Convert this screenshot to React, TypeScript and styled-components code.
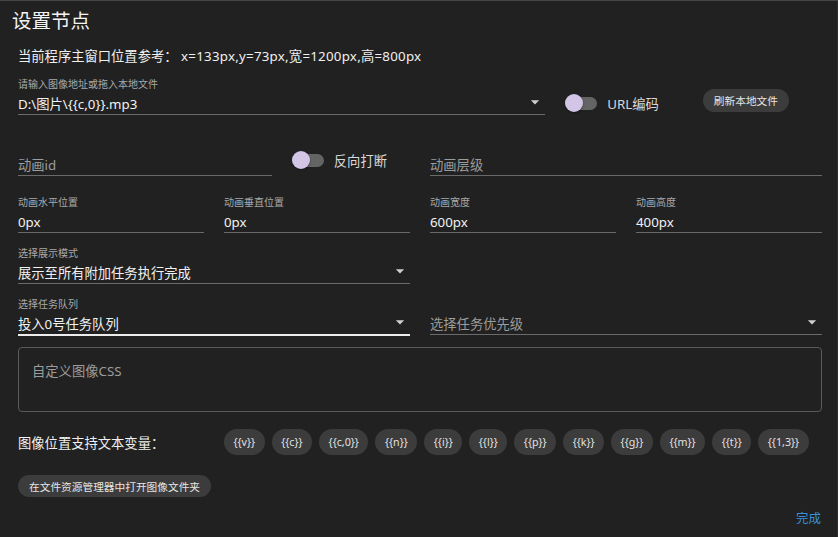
import React from 'react';
import styled, { createGlobalStyle } from 'styled-components';

const GlobalStyle = createGlobalStyle`
  html, body {
    margin: 0;
    padding: 0;
    background: #212121;
  }
  body {
    font-family: "Noto Sans", "Noto Sans CJK SC", sans-serif;
    color: #f0f0f0;
  }
  * {
    box-sizing: border-box;
  }
`;

const Dialog = styled.div`
  width: 838px;
  height: 537px;
  background: #212121;
  border-top: 1px solid #464646;
  border-right: 1px solid #303030;
  display: flex;
  flex-direction: column;
`;

const Title = styled.h2`
  margin: 0;
  padding: 7px 12px 0;
  font-size: 19.5px;
  font-weight: 400;
  line-height: 26px;
  color: #f4f4f4;
`;

const Content = styled.div`
  padding: 0 15px 0 18px;
  display: flex;
  flex-direction: column;
`;

const InfoLine = styled.div`
  margin-top: 12px;
  font-size: 13.3px;
  line-height: 20px;
  color: #f0f0f0;
  white-space: pre;
`;

const InfoValue = styled.span`
  letter-spacing: 0.25px;
`;

const Row = styled.div<{ $top: number }>`
  margin-top: ${p => p.$top}px;
  display: flex;
  align-items: flex-end;
`;

const Grid = styled.div<{ $top: number; $cols: number }>`
  margin-top: ${p => p.$top}px;
  display: grid;
  grid-template-columns: repeat(${p => p.$cols}, 1fr);
  column-gap: 20px;
  align-items: start;
`;

const Cell = styled.div`
  display: flex;
  align-items: flex-end;
`;

const FieldBox = styled.div<{ $focused?: boolean }>`
  flex: 1;
  min-width: 0;
  display: flex;
  flex-direction: column;
  border-bottom: ${p => (p.$focused ? '2px solid #ececec' : '1px solid #6a6a6a')};
`;

const FieldLabel = styled.div`
  height: 14px;
  margin-bottom: 3px;
  font-size: 10px;
  line-height: 14px;
  color: #a9a9a9;
  white-space: nowrap;
`;

const FieldInput = styled.div<{ $placeholder?: boolean }>`
  height: 20px;
  display: flex;
  align-items: center;
  font-size: 13.3px;
  line-height: 20px;
  color: ${p => (p.$placeholder ? '#9c9c9c' : '#f2f2f2')};
  white-space: nowrap;
`;

const InputText = styled.span`
  flex: 1;
`;

const ArrowIcon = styled.svg`
  width: 20px;
  height: 20px;
  flex: none;
  transform: translateY(-2px);
  fill: #cfcfcf;
`;

const SwitchGroup = styled.label<{ $left: number; $right: number; $bottom: number }>`
  display: flex;
  align-items: center;
  gap: 10px;
  height: 20px;
  margin: 0 ${p => p.$right}px ${p => p.$bottom}px ${p => p.$left}px;
  font-size: 13.3px;
  color: #d8d8d8;
  white-space: nowrap;
`;

const SwitchTrack = styled.span`
  position: relative;
  width: 32px;
  height: 13px;
  border-radius: 7px;
  background: #646464;
`;

const SwitchThumb = styled.span`
  position: absolute;
  left: 0;
  top: -2.5px;
  width: 18px;
  height: 18px;
  border-radius: 50%;
  background: #d3c5e6;
  box-shadow: 0 1px 2px rgba(0, 0, 0, 0.4);
`;

const PillButton = styled.button<{ $height: number }>`
  height: ${p => p.$height}px;
  padding: 0 11px;
  border: none;
  border-radius: ${p => p.$height / 2}px;
  background: #3c3c3c;
  color: #e6e6e6;
  font-family: inherit;
  font-size: 10.7px;
  white-space: nowrap;
  cursor: pointer;
`;

const RefreshButton = styled(PillButton)`
  margin: 0 33px 3px 44px;
`;

const FolderButton = styled(PillButton)`
  margin-top: 20px;
  align-self: flex-start;
`;

const CssBox = styled.div`
  margin-top: 11px;
  height: 65px;
  border: 1px solid #595959;
  border-radius: 4px;
  padding: 13px;
  font-size: 13.3px;
  line-height: 20px;
  color: #9c9c9c;
`;

const VarRow = styled.div`
  margin-top: 17px;
  height: 26px;
  display: flex;
  align-items: center;
`;

const VarLabel = styled.div`
  width: 206px;
  flex: none;
  font-size: 13.3px;
  color: #f0f0f0;
`;

const ChipList = styled.div`
  display: flex;
  gap: 7px;
`;

const Chip = styled.span`
  height: 26px;
  padding: 0 9.5px;
  border-radius: 13px;
  background: #3c3c3c;
  color: #e2e2e2;
  font-size: 10.7px;
  display: flex;
  align-items: center;
`;

const Footer = styled.div`
  margin-top: auto;
  padding: 0 16px 10px;
  display: flex;
  justify-content: flex-end;
`;

const DoneButton = styled.button`
  border: none;
  background: none;
  padding: 0;
  font-family: inherit;
  font-size: 12.5px;
  line-height: 16px;
  color: #3a8fd9;
  cursor: pointer;
`;

type FieldProps = {
  label?: string;
  value?: string;
  placeholder?: string;
  select?: boolean;
  focused?: boolean;
};

const Field = ({ label, value, placeholder, select, focused }: FieldProps): JSX.Element => (
  <FieldBox $focused={focused}>
    <FieldLabel>{label}</FieldLabel>
    <FieldInput $placeholder={!value}>
      <InputText>{value || placeholder}</InputText>
      {select && (
        <ArrowIcon viewBox="0 0 24 24">
          <path d="M7 10l5 5 5-5z" />
        </ArrowIcon>
      )}
    </FieldInput>
  </FieldBox>
);

const Switch = (): JSX.Element => (
  <SwitchTrack>
    <SwitchThumb />
  </SwitchTrack>
);

const variables = ['{{v}}', '{{c}}', '{{c,0}}', '{{n}}', '{{i}}', '{{l}}', '{{p}}', '{{k}}', '{{g}}', '{{m}}', '{{t}}', '{{1,3}}'];

const App = (): JSX.Element => (
  <>
    <GlobalStyle />
    <Dialog>
      <Title>设置节点</Title>
      <Content>
        <InfoLine>
          当前程序主窗口位置参考： <InfoValue>x=133px,y=73px,宽=1200px,高=800px</InfoValue>
        </InfoLine>
        <Row $top={11}>
          <Field label="请输入图像地址或拖入本地文件" value="D:\图片\{{c,0}}.mp3" select />
          <SwitchGroup $left={20} $right={0} $bottom={2}>
            <Switch />
            URL编码
          </SwitchGroup>
          <RefreshButton $height={23}>刷新本地文件</RefreshButton>
        </Row>
        <Grid $top={23} $cols={2}>
          <Cell>
            <Field placeholder="动画id" />
            <SwitchGroup $left={20} $right={23} $bottom={6}>
              <Switch />
              反向打断
            </SwitchGroup>
          </Cell>
          <Field placeholder="动画层级" />
        </Grid>
        <Grid $top={19} $cols={4}>
          <Field label="动画水平位置" value="0px" />
          <Field label="动画垂直位置" value="0px" />
          <Field label="动画宽度" value="600px" />
          <Field label="动画高度" value="400px" />
        </Grid>
        <Grid $top={13} $cols={2}>
          <Field label="选择展示模式" value="展示至所有附加任务执行完成" select />
        </Grid>
        <Grid $top={13} $cols={2}>
          <Field label="选择任务队列" value="投入0号任务队列" select focused />
          <Field placeholder="选择任务优先级" select />
        </Grid>
        <CssBox>自定义图像CSS</CssBox>
        <VarRow>
          <VarLabel>图像位置支持文本变量：</VarLabel>
          <ChipList>
            {variables.map(v => (
              <Chip key={v}>{v}</Chip>
            ))}
          </ChipList>
        </VarRow>
        <FolderButton $height={22}>在文件资源管理器中打开图像文件夹</FolderButton>
      </Content>
      <Footer>
        <DoneButton>完成</DoneButton>
      </Footer>
    </Dialog>
  </>
);

export default App;
